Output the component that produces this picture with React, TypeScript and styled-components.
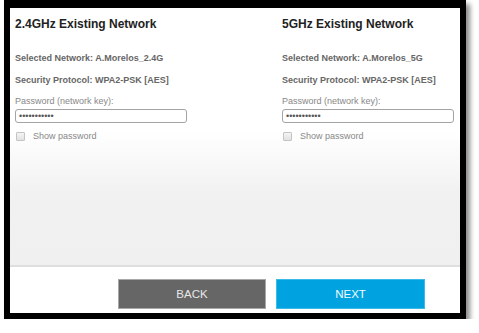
import * as React from "react";
import styled, { createGlobalStyle } from "styled-components";

const GlobalStyle = createGlobalStyle`
  html, body {
    margin: 0;
    padding: 0;
    background: #fff;
  }
  body {
    font-family: "Liberation Sans", Arial, sans-serif;
  }
`;

const Frame = styled.div`
  margin-left: 4px;
  width: 450px;
  height: 305px;
  border-style: solid;
  border-color: #000;
  border-width: 8px 6px 6px 6px;
  box-shadow: 4px 4px 5px rgba(0, 0, 0, 0.45);
  display: flex;
  flex-direction: column;
  background: #fff;
`;

const Body = styled.div`
  flex: 1;
  display: grid;
  grid-template-columns: 267px 1fr;
  padding: 9px 0 0 5px;
  background: linear-gradient(
    to bottom,
    #ffffff 0%,
    #ffffff 48%,
    #f1f1f1 72%,
    #f0f0f0 100%
  );
  border-bottom: 2px solid #dedede;
`;

const Column = styled.div`
  display: flex;
  flex-direction: column;
`;

const Heading = styled.h2`
  margin: 0;
  font-size: 12px;
  line-height: 14px;
  font-weight: bold;
  color: #222;
`;

const Info = styled.div<{ $gap: number }>`
  margin-top: ${({ $gap }) => $gap}px;
  font-size: 9px;
  line-height: 12px;
  font-weight: bold;
  color: #666;
`;

const Label = styled.label`
  margin-top: 9px;
  font-size: 9px;
  line-height: 12px;
  color: #888;
`;

const PasswordInput = styled.input`
  margin: 2px 0 0;
  box-sizing: border-box;
  width: 172px;
  height: 14px;
  padding: 0 3px;
  border: 1px solid #a4a4a4;
  border-radius: 3px;
  font-family: "Liberation Sans", Arial, sans-serif;
  font-size: 9px;
  color: #555;
  background: #fff;
  outline: none;
`;

const CheckRow = styled.label`
  margin-top: 7px;
  display: flex;
  align-items: center;
  gap: 8px;
  padding-left: 1px;
  font-size: 9px;
  line-height: 12px;
  color: #888;
`;

const Box = styled.span`
  width: 7px;
  height: 7px;
  border: 1px solid #c4c4c4;
  border-radius: 1px;
  background: linear-gradient(#f4f4f4, #e2e2e2);
`;

const Footer = styled.div`
  height: 46px;
  box-sizing: border-box;
  padding: 12px 35px 0 0;
  display: flex;
  justify-content: flex-end;
  gap: 10px;
  background: #fff;
`;

const Button = styled.button<{ $primary?: boolean }>`
  width: ${({ $primary }) => ($primary ? 149 : 148)}px;
  height: 30px;
  border: 1px solid ${({ $primary }) => ($primary ? "#3cbbe9" : "#a8a8a8")};
  background: ${({ $primary }) => ($primary ? "#00a3e0" : "#666666")};
  color: ${({ $primary }) => ($primary ? "#f4fbff" : "#e8e8e8")};
  font-family: "Liberation Sans", Arial, sans-serif;
  font-size: 11.5px;
  padding: 0;
  cursor: pointer;
`;

interface NetworkProps {
  band: string;
  ssid: string;
}

const Network: React.FC<NetworkProps> = ({ band, ssid }) => (
  <Column>
    <Heading>{band} Existing Network</Heading>
    <Info $gap={21}>Selected Network: {ssid}</Info>
    <Info $gap={10}>Security Protocol: WPA2-PSK [AES]</Info>
    <Label>Password (network key):</Label>
    <PasswordInput type="password" defaultValue="12345678901" readOnly />
    <CheckRow>
      <Box />
      Show password
    </CheckRow>
  </Column>
);

export default function App() {
  return (
    <>
      <GlobalStyle />
      <Frame>
        <Body>
          <Network band="2.4GHz" ssid="A.Morelos_2.4G" />
          <Network band="5GHz" ssid="A.Morelos_5G" />
        </Body>
        <Footer>
          <Button>BACK</Button>
          <Button $primary>NEXT</Button>
        </Footer>
      </Frame>
    </>
  );
}
